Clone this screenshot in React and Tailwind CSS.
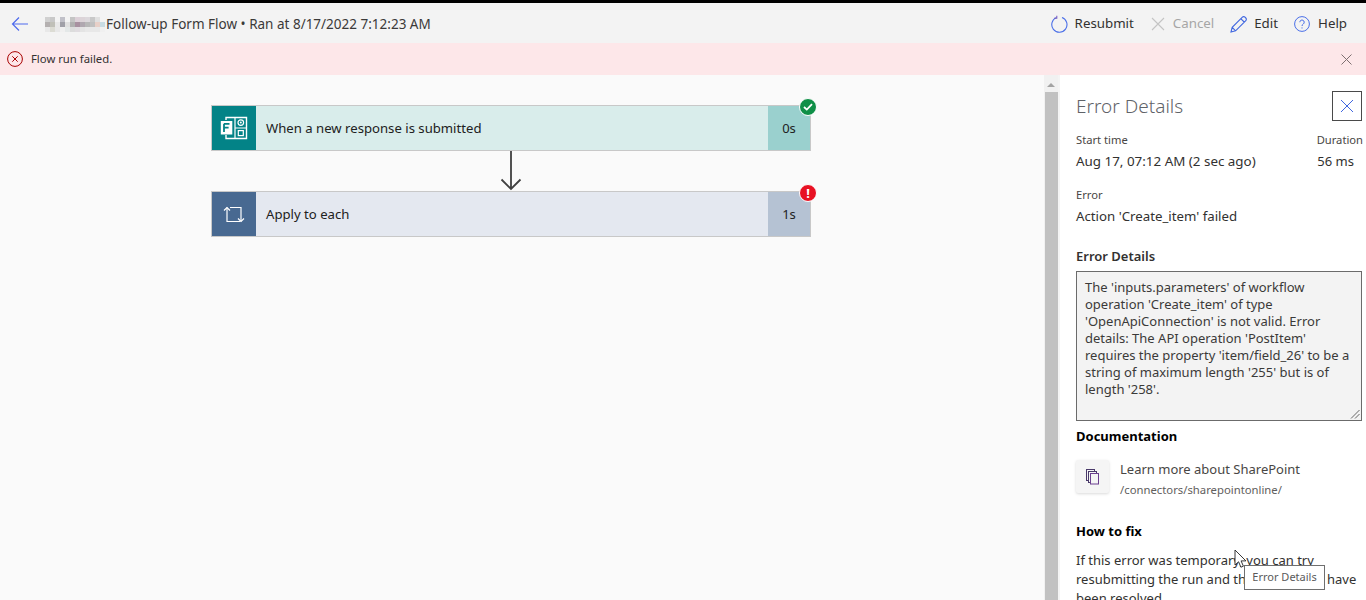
import React from "react";

const FONT = "font-['Noto_Sans','Open_Sans',sans-serif]";

function Blur() {
  const rows = [
    ["#d0d0d0", "#c8c8c8", "#f3f3f3", "#c0c0c8", "#f3f3f3", "#c4c4c4", "#dcd0d8", "#dcd4d8", "#dcd8dc", "#c8c8c8", "#e0e0e0", "#f3f3f3"],
    ["#b4b0b0", "#c0c0b8", "#e8e8e8", "#a0a0a8", "#e0e0e0", "#b0b0b0", "#a890a0", "#b0a8b0", "#b8b8b8", "#c0c0c0", "#e8d0c8", "#c8dce4"],
    ["#e8e8e8", "#dcdcd4", "#e8e8e8", "#f0f0f0", "#e4e8e8", "#dcdcdc", "#e0dce0", "#e4e4e4", "#e8e8e8", "#e8e8e8", "#e8e8e8", "#f0f0f0"],
  ];
  return (
    <div className="w-[60px] mr-[1px] shrink-0 flex flex-col">
      {rows.map((row, r) => (
        <div key={r} className="flex">
          {row.map((c, i) => (
            <div key={i} className="w-[5px] h-[5px]" style={{ backgroundColor: c }} />
          ))}
        </div>
      ))}
    </div>
  );
}

function ToolBtn({ icon, label, muted, gap }) {
  return (
    <div className={`flex items-center ${gap}`}>
      {icon}
      <span className={muted ? "text-[#a6a6a6]" : "text-[#323130]"}>{label}</span>
    </div>
  );
}

function FlowCard({ bar, body, side, icon, title, time, badge }) {
  return (
    <div className="relative flex w-[600px] h-[46px] border border-[#c8c8c8]" style={{ backgroundColor: body }}>
      <div className="w-[44px] flex items-center justify-center shrink-0" style={{ backgroundColor: bar }}>{icon}</div>
      <div className="flex-1 flex items-center pl-[10px] pt-[2px] text-[13.15px] text-[#212121]">{title}</div>
      <div className="w-[42px] flex items-center justify-center pt-[2px] text-[13px] text-[#212121]" style={{ backgroundColor: side }}>{time}</div>
      {badge}
    </div>
  );
}

export default function App() {
  return (
    <div className={`${FONT} h-[600px] w-[1366px] overflow-hidden flex flex-col bg-white text-[13px] text-[#323130]`}>
      <div className="h-[3px] bg-black shrink-0" />
      <header className="h-[40px] shrink-0 bg-[#f3f3f3] flex items-center justify-between pl-[11px] pr-[19px] pt-[2px]">
        <div className="flex items-center">
          <svg width="18" height="16" viewBox="0 0 18 16" fill="none" stroke="#4f6bed" strokeWidth="1.2" className="mr-[16px]">
            <path d="M17 8H1.5M8 1.5 1.5 8 8 14.5" />
          </svg>
          <Blur />
          <span className="text-[13.5px] text-[#3b3a39] whitespace-nowrap">Follow-up Form Flow • Ran at 8/17/2022 7:12:23 AM</span>
        </div>
        <div className="flex items-center text-[13.3px]">
          <ToolBtn
            label="Resubmit"
            gap="gap-[7px]"
            icon={
              <svg width="17" height="18" viewBox="0 0 17 18" fill="none" stroke="#4a6fe8" strokeWidth="1.1">
                <path d="M5.5 2.6A7.6 7.6 0 1 0 11 2.5" />
                <path d="M5.8 0.8V3.2H3" stroke="#7a5fc0" />
              </svg>
            }
          />
          <div className="w-[17px]" />
          <ToolBtn
            label="Cancel"
            muted
            gap="gap-[8px]"
            icon={
              <svg width="14" height="14" viewBox="0 0 14 14" stroke="#c4c4c4" strokeWidth="1.1">
                <path d="M1 1l12 12M13 1 1 13" />
              </svg>
            }
          />
          <div className="w-[16px]" />
          <ToolBtn
            label="Edit"
            gap="gap-[7px]"
            icon={
              <svg width="17" height="17" viewBox="0 0 17 17" fill="none" stroke="#3f66e0" strokeWidth="1.1">
                <path d="M1 16l1.2-4.6L12.4 1.2a1.8 1.8 0 0 1 2.6 0l.8.8a1.8 1.8 0 0 1 0 2.6L5.6 14.8 1 16ZM2.2 11.4l3.4 3.4M11 2.8l3.2 3.2" />
              </svg>
            }
          />
          <div className="w-[16px]" />
          <ToolBtn
            label="Help"
            gap="gap-[8px]"
            icon={
              <svg width="16" height="16" viewBox="0 0 16 16" fill="none" stroke="#4a6fe8" strokeWidth="1">
                <circle cx="8" cy="8" r="7.4" />
                <path d="M5.8 6.2a2.2 2.2 0 1 1 3.5 1.8c-.8.6-1.3 1-1.3 2" />
                <path d="M8 11.4v1.1" />
              </svg>
            }
          />
        </div>
      </header>
      <div className="h-[32px] shrink-0 bg-[#fde7e9] flex items-center justify-between pl-[7px] pr-[14px] text-[11.3px] text-[#323130]">
        <div className="flex items-center gap-[8px]">
          <svg width="16" height="16" viewBox="0 0 16 16" fill="none" stroke="#a80000" strokeWidth="1">
            <circle cx="8" cy="8" r="7.4" />
            <path d="M5.3 5.3l5.4 5.4M10.7 5.3l-5.4 5.4" />
          </svg>
          <span>Flow run failed.</span>
        </div>
        <svg width="11" height="11" viewBox="0 0 11 11" stroke="#7d6f70" strokeWidth="1">
          <path d="M.5.5l10 10M10.5.5l-10 10" />
        </svg>
      </div>
      <div className="flex-1 flex min-h-0 relative">
        <main className="w-[1044px] shrink-0 bg-[#fafafa] flex flex-col pt-[30px] pl-[211px]">
          <FlowCard
            bar="#038387"
            body="#d9edeb"
            side="#9ad0ce"
            title="When a new response is submitted"
            time="0s"
            icon={
              <svg width="28" height="24" viewBox="0 0 28 24" fill="none">
                <path d="M6 4V1.5h20.5v21H6V19" stroke="#fff" strokeWidth="1.4" />
                <path d="M15 12h11.5M15 1.5V22.5" stroke="#fff" strokeWidth="1.2" />
                <circle cx="20.8" cy="6.6" r="2.8" stroke="#fff" strokeWidth="1.2" />
                <circle cx="20.8" cy="6.6" r="1" fill="#fff" />
                <rect x="18.3" y="14.6" width="5" height="5" stroke="#fff" strokeWidth="1.2" />
                <rect x="0.8" y="5" width="11.5" height="13.5" fill="#fff" />
                <path d="M4 7.8h5.5M4 7.8V16M4 11.6h4.6" stroke="#038387" strokeWidth="1.8" />
              </svg>
            }
            badge={
              <div className="absolute -right-[7px] -top-[8px] w-[18px] h-[18px] rounded-full bg-[#0f8f47] border border-white flex items-center justify-center">
                <svg width="10" height="8" viewBox="0 0 10 8" fill="none" stroke="#fff" strokeWidth="1.8">
                  <path d="M1 4l2.8 2.6L9 1.2" />
                </svg>
              </div>
            }
          />
          <div className="w-[600px] h-[40px] flex justify-center">
            <svg width="22" height="40" viewBox="0 0 22 40" fill="none" stroke="#404040" strokeWidth="1.8">
              <path d="M11 0v38M1.5 28.5 11 38l9.5-9.5" />
            </svg>
          </div>
          <FlowCard
            bar="#486991"
            body="#e4e8f0"
            side="#b5c2d3"
            title="Apply to each"
            time="1s"
            icon={
              <svg width="22" height="17" viewBox="0 0 22 17" fill="none" stroke="#fff" strokeWidth="1.2">
                <path d="M1 4.5 4 1.5l3 3" />
                <path d="M4 1.5V15.5H17" />
                <path d="M7 1.5H18V15.5" />
                <path d="M15 12.5l3 3 3-3" />
              </svg>
            }
            badge={
              <div className="absolute -right-[7px] -top-[8px] w-[18px] h-[18px] rounded-full bg-[#e81123] border border-white flex items-center justify-center text-white text-[13px] font-bold leading-none">
                !
              </div>
            }
          />
        </main>
        <div className="w-[14px] shrink-0 bg-[#f1f1f1] flex flex-col items-center">
          <div className="h-[17px] flex items-end pb-[5px]">
            <div className="w-0 h-0 border-x-[4px] border-x-transparent border-b-[4px] border-b-[#a3a3a3]" />
          </div>
          <div className="w-[13px] flex-1 bg-[#c1c1c1]" />
        </div>
        <div className="w-[2px] shrink-0 bg-[#f4f4f4]" />
        <aside className="flex-1 min-w-0 overflow-hidden bg-white pl-[16px] pr-[4px] relative text-[13px] text-[#323130]">
          <div className="flex items-start justify-between h-[46px] pt-[16px]">
            <h2 className="text-[19px] leading-[30px] font-light text-[#5f6368]">Error Details</h2>
            <div className="w-[30px] h-[30px] border border-[#4a4a4a] flex items-center justify-center">
              <svg width="14" height="14" viewBox="0 0 14 14" stroke="#3f66e0" strokeWidth="1">
                <path d="M1 1l12 12M13 1 1 13" />
              </svg>
            </div>
          </div>
          <div className="flex justify-between mt-[11px] text-[11.2px] leading-[16px] text-[#484644]">
            <span>Start time</span>
            <span className="-mr-[1px]">Duration</span>
          </div>
          <div className="flex justify-between mt-[3px] leading-[20px] pr-[8px]">
            <span className="text-[13.4px]">Aug 17, 07:12 AM (2 sec ago)</span>
            <span>56 ms</span>
          </div>
          <div className="mt-[16px] text-[11.2px] leading-[16px] text-[#484644]">Error</div>
          <div className="mt-[3px] leading-[20px] text-[13.25px]">Action 'Create_item' failed</div>
          <div className="mt-[20px] font-semibold leading-[20px]">Error Details</div>
          <div className="relative mt-[5px] w-[286px] h-[150px] bg-[#f3f3f3] border border-[#6b6b6b] pt-[7px] pl-[8px] pr-[4px] text-[13px] leading-[17px] text-[#3b3a39]">
            <p>The 'inputs.parameters' of workflow operation 'Create_item' of type 'OpenApiConnection' is not valid. Error details: The API operation 'PostItem' requires the property 'item/field_26' to be a string of maximum length '255' but is of length '258'.</p>
            <svg width="10" height="10" viewBox="0 0 10 10" stroke="#666" strokeWidth="1" className="absolute right-[1px] bottom-[1px]">
              <path d="M9.5 1 1 9.5M9.5 5 5 9.5" />
            </svg>
          </div>
          <div className="mt-[5px] font-bold leading-[20px] text-black">Documentation</div>
          <div className="flex mt-[14px]">
            <div className="w-[33px] h-[33px] bg-[#f5f5f5] rounded-[2px] shadow-[0_1px_3px_rgba(0,0,0,0.15)] flex items-center justify-center mr-[11px] shrink-0">
              <svg width="14" height="16" viewBox="0 0 14 16" fill="none" strokeWidth="1">
                <rect x="0.5" y="0.5" width="8" height="11" fill="#f5f5f5" stroke="#4a3a6a" />
                <rect x="2.5" y="2.5" width="8" height="11" fill="#f5f5f5" stroke="#4a3a6a" />
                <rect x="4.5" y="4.5" width="8" height="10.5" fill="#f5f5f5" stroke="#6b3f8f" />
              </svg>
            </div>
            <div className="-mt-[1px]">
              <div className="leading-[20px] text-[#484644]">Learn more about SharePoint</div>
              <div className="mt-[1px] text-[11.3px] leading-[20px] text-[#5f5e5d]">/connectors/sharepointonline/</div>
            </div>
          </div>
          <div className="mt-[21px] font-bold leading-[20px] text-black">How to fix</div>
          <p className="mt-[10px] leading-[19px]">If this error was temporary, you can try resubmitting the run and the issues may have been resolved.</p>
          <div className="absolute left-[184px] top-[490px] h-[25px] w-[81px] bg-white border border-[#6f6f6f] flex items-center justify-center text-[11px] text-[#5a5a5a] whitespace-nowrap">Error Details</div>
          <svg width="13" height="20" viewBox="0 0 13 20" className="absolute left-[174px] top-[474px]" fill="#fff" stroke="#222" strokeWidth="0.9">
            <path d="M1 1v15l3.6-3.2 2.3 5.4 2.5-1-2.3-5.3h4.8L1 1Z" />
          </svg>
        </aside>
      </div>
    </div>
  );
}
